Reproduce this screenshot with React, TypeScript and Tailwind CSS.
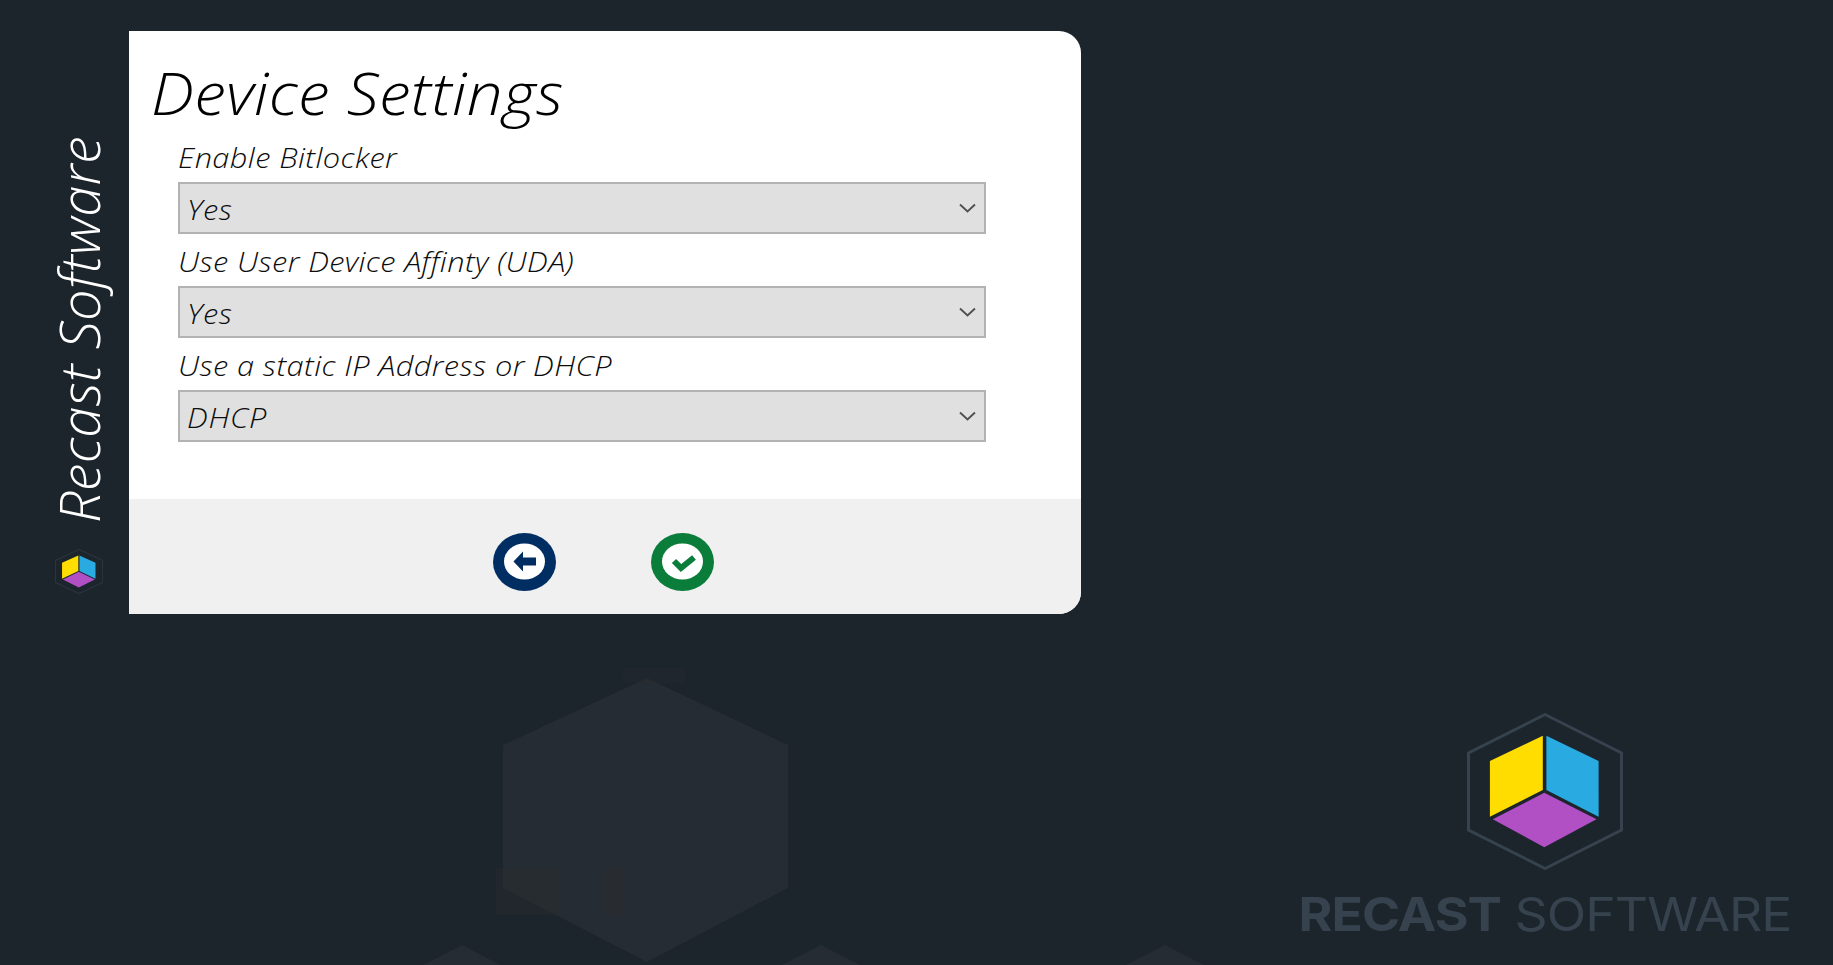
const fontStack = "font-['Open_Sans','Noto_Sans',sans-serif]";

function Cube({ className, stroke = 3, line = "#36424d" }: { className: string; stroke?: number; line?: string }) {
  return (
    <svg viewBox="0 0 156 157" preserveAspectRatio="none" className={className}>
      <polygon points="78,1.5 154.5,40 154.5,117 78,155.5 1.5,117 1.5,40" fill="none" stroke={line} strokeWidth={stroke} />
      <polygon points="75.8,22.7 22.9,48 22.9,103.7 75.8,77" fill="#ffdd00" />
      <polygon points="79.4,22.7 131.6,48 131.6,103.7 79.4,77" fill="#29abe2" />
      <polygon points="77.3,79.7 129.5,106.3 77.3,134.3 25.8,106.3" fill="#b14fc5" />
    </svg>
  );
}

function Field({ label, value }: { label: string; value: string }) {
  return (
    <div className="flex flex-col">
      <div className="h-[52px] flex items-center">
        <span className="pt-[1px] text-[28px] font-light italic text-[#0c0c0c] leading-none whitespace-nowrap tracking-[0.35px] scale-x-110 origin-left">{label}</span>
      </div>
      <div className="h-[52px] w-[808px] bg-[#e0e0e0] border-2 border-[#b2b2b2] flex items-center justify-between pl-[7px] pr-2">
        <span className="pt-[1px] text-[28px] font-light italic text-[#0c0c0c] leading-none tracking-[0.6px] scale-x-110 origin-left">{value}</span>
        <svg width="17" height="10" viewBox="0 0 17 10" fill="none">
          <path d="M1 1.5 L8.5 8.5 L16 1.5" stroke="#505050" strokeWidth="1.9" />
        </svg>
      </div>
    </div>
  );
}

export default function App() {
  return (
    <div className={`relative h-[965px] w-full overflow-hidden bg-[#1c242c] ${fontStack}`}>
      <svg className="absolute inset-0 h-full w-full" viewBox="0 0 1833 965">
        <polygon points="647,678 788,745 788,888 647,962 503,888 503,745" fill="#252c33" />
        <polygon points="462,945 520,975 404,975" fill="#252c33" />
        <polygon points="821,945 880,975 762,975" fill="#252c33" />
        <polygon points="1165,945 1224,975 1106,975" fill="#252c33" />
        <rect x="496" y="868" width="63" height="47" fill="#2a2c2f" opacity="0.45" />
        <rect x="603" y="868" width="20" height="47" fill="#2a2c2f" opacity="0.7" />
        <rect x="623" y="668" width="62" height="15" fill="#2a2c2f" opacity="0.25" />
      </svg>

      <div className="relative flex pt-[31px]">
        <div className="w-[129px] h-[583px] flex flex-col items-center">
          <div className="h-[492px] flex items-end justify-center w-full pl-[26px]">
            <span className="[writing-mode:vertical-rl] rotate-180 text-[56px] font-light italic text-white leading-none whitespace-nowrap tracking-[0.25px]">
              Recast Software
            </span>
          </div>
          <div className="mt-[26px] pl-[28px] ">
            <Cube className="w-[48px] h-[45px]" stroke={4} line="#2a343d" />
          </div>
        </div>

        <div className="w-[952px] h-[583px] rounded-r-[22px] overflow-hidden bg-white flex flex-col">
          <div className="h-[468px] flex flex-col">
            <h1 className="h-[99px] pl-[20px] pt-[33px] text-[58px] font-light italic text-black leading-none whitespace-nowrap tracking-[0.3px] scale-x-110 origin-left">
              Device Settings
            </h1>
            <div className="pl-[49px] flex flex-col">
              <Field label="Enable Bitlocker" value="Yes" />
              <Field label="Use User Device Affinty (UDA)" value="Yes" />
              <Field label="Use a static IP Address or DHCP" value="DHCP" />
            </div>
          </div>
          <div className="flex-1 bg-[#f0f0f0] flex justify-center gap-[95px] pt-[34px] pr-[3px]">
            <svg width="63" height="58" viewBox="0 0 63 58">
              <ellipse cx="31.5" cy="29" rx="31.5" ry="29" fill="#002d62" />
              <ellipse cx="31.5" cy="28.5" rx="20.5" ry="18" fill="#fff" />
              <path d="M20.5 28.5 L30 18.5 V24.5 H43 V32.5 H30 V38.5 Z" fill="#002d62" />
            </svg>
            <svg width="63" height="58" viewBox="0 0 63 58">
              <ellipse cx="31.5" cy="29" rx="31.5" ry="29" fill="#0a7d3a" />
              <ellipse cx="31.5" cy="28.5" rx="20.5" ry="18" fill="#fff" />
              <path d="M23 28 L30 35 L43 24.5" fill="none" stroke="#0a7d3a" strokeWidth="6" />
            </svg>
          </div>
        </div>
      </div>

      <div className="relative flex justify-end pr-[42px] pt-[99px]">
        <div className="flex flex-col items-center w-[492px]">
          <Cube className="w-[156px] h-[157px]" />
          <div className="mt-[24px] text-[47px] leading-[40px] whitespace-nowrap text-[#36424d] font-['Inter',sans-serif] tracking-[-0.9px] scale-x-110">
            <span className="font-bold">RECAST</span> <span className="font-normal">SOFTWARE</span>
          </div>
        </div>
      </div>
    </div>
  );
}
